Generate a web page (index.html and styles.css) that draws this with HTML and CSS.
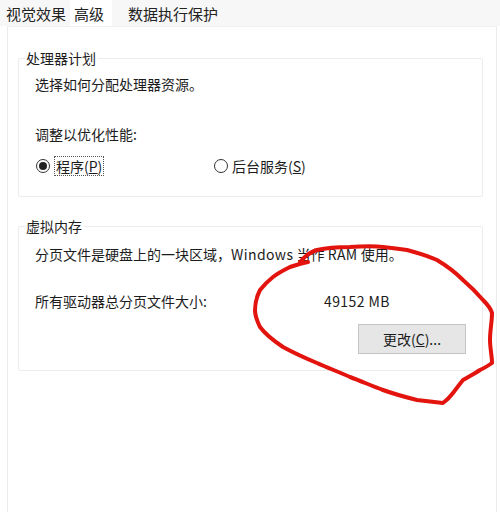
FILE: index.html
```html
<!DOCTYPE html>
<html lang="zh-CN">
<head>
  <meta charset="UTF-8">
  <meta name="viewport" content="width=device-width, initial-scale=1.0">
  <title>性能选项</title>
  <link rel="stylesheet" href="styles.css">
</head>
<body>
  <div class="tabs">
    <span class="tab">视觉效果</span>
    <span class="tab active">高级</span>
    <span class="tab">数据执行保护</span>
  </div>

  <div class="panel">
    <fieldset class="group group-cpu">
      <legend>处理器计划</legend>
      <p class="line">选择如何分配处理器资源。</p>
      <p class="line gap-lg">调整以优化性能:</p>
      <div class="radios">
        <label class="radio">
          <span class="dot checked"></span>
          <span class="focus">程序(<u>P</u>)</span>
        </label>
        <label class="radio">
          <span class="dot"></span>
          <span>后台服务(<u>S</u>)</span>
        </label>
      </div>
    </fieldset>

    <fieldset class="group group-mem">
      <legend>虚拟内存</legend>
      <p class="line">分页文件是硬盘上的一块区域，<span class="latin">Windows</span> 当作 <span class="latin">RAM</span> 使用。</p>
      <div class="size-row">
        <span>所有驱动器总分页文件大小:</span>
        <span class="latin">49152 MB</span>
      </div>
      <div class="actions">
        <button class="btn">更改(<u>C</u>)...</button>
      </div>
    </fieldset>
  </div>

  <!-- 手绘红圈 -->
  <svg class="scribble" width="500" height="512" viewBox="0 0 500 512">
    <path d="M300 262 C305 256 310 252 317 250 C330 247 340 247 350 247 C365 246 375 246 383 247 C392 248 400 249 407 250 C418 253 428 256 437 260 C447 266 455 272 463 280 C471 287 477 293 483 300 C488 305 491 309 492 313 C492 322 490 330 490 340 C490 348 492 356 492 363 C488 366 484 368 480 370 C474 374 468 377 463 380 C459 385 456 389 453 393 C450 397 447 400 443 403 C434 402 426 401 417 400 C405 397 394 394 383 390 C372 386 361 381 350 377 C339 372 328 368 317 363 C305 358 294 353 283 347 C274 341 266 335 260 327 C257 321 255 316 255 310 C255 302 257 296 260 290 C264 285 268 281 273 277 C278 273 284 270 290 267 C296 265 302 263 308 262"
      fill="none" stroke="#e3140e" stroke-width="4" stroke-linecap="round" stroke-linejoin="round"/>
  </svg>
</body>
</html>
```

FILE: styles.css
```css
* {
  margin: 0;
  padding: 0;
  box-sizing: border-box;
}

body {
  font-family: "Noto Sans CJK SC", "Noto Sans", sans-serif;
  font-size: 14px;
  color: #1c1c1c;
  background: #fff;
  width: 500px;
  height: 512px;
  overflow: hidden;
  position: relative;
}

/* 选项卡 */
.tabs {
  display: flex;
  height: 26px;
  background: #f7f7f7;
  padding-left: 4px;
}

.tab {
  font-size: 15px;
  line-height: 28px;
  padding: 0 4px 0 2px;
  color: #222;
}

.tab.active {
  background: #fff;
  padding: 0 8px 0 4px;
  margin-right: 14px;
}

.panel {
  margin-left: 7px;
  width: 490px;
  height: 486px;
  border-left: 1px solid #ececec;
  border-right: 1px solid #ececec;
  border-top: 1px solid #f0f0f0;
  padding: 0 0 0 10px;
}

/* 分组框 */
.group {
  width: 465px;
  border: 1px solid #ececec;
  border-radius: 2px;
  padding: 0 16px;
}

.group legend {
  margin-left: -10px;
  padding: 0 2px 0 1px;
  font-size: 14px;
  line-height: 20px;
}

.group-cpu {
  margin-top: 21px;
  padding-top: 6px;
  padding-bottom: 20px;
}

.group-mem {
  margin-top: 19px;
  padding-top: 8px;
  padding-bottom: 16px;
}

.line {
  line-height: 20px;
}

.latin {
  letter-spacing: 0.4px;
}

.gap-lg {
  margin-top: 30px;
}

.radios {
  display: grid;
  grid-template-columns: 178px auto;
  margin-top: 12px;
  height: 20px;
  align-items: center;
}

.radio {
  display: flex;
  align-items: center;
  gap: 4px;
  line-height: 18px;
}

.dot {
  width: 14px;
  height: 14px;
  border: 1px solid #333;
  border-radius: 50%;
  display: flex;
  align-items: center;
  justify-content: center;
  margin-left: 1px;
}

.dot.checked::after {
  content: "";
  width: 8px;
  height: 8px;
  border-radius: 50%;
  background: #222;
}

.focus {
  border: 1px dotted #555;
  padding: 0 1px;
}

.size-row {
  display: grid;
  grid-template-columns: 289px auto;
  line-height: 20px;
  margin-top: 27px;
}

.actions {
  display: flex;
  justify-content: flex-end;
  margin-top: 13px;
}

.btn {
  width: 108px;
  height: 30px;
  font-family: inherit;
  font-size: 14px;
  color: #1c1c1c;
  background: #e6e6e6;
  border: 1px solid #c4c4c4;
}

/* 红色标注 */
.scribble {
  position: absolute;
  left: 0;
  top: 0;
  pointer-events: none;
}
```
